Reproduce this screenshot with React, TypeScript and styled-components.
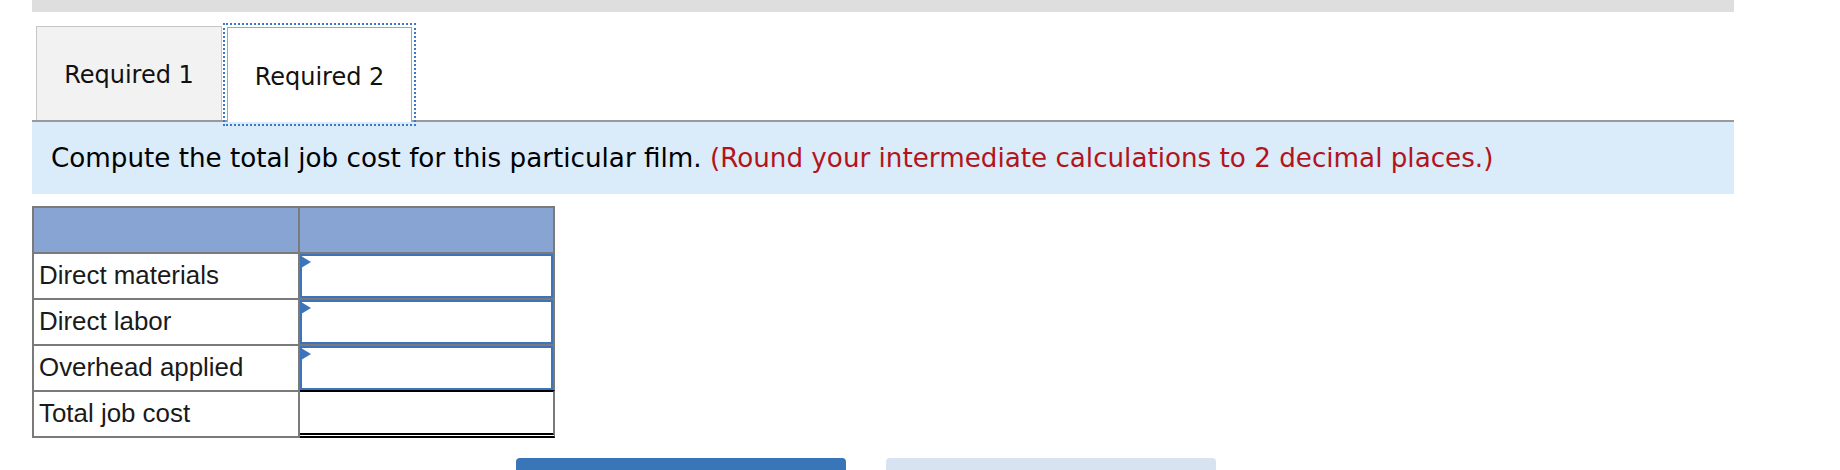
import React from 'react'
import styled, { createGlobalStyle } from 'styled-components'

//Global
const GlobalStyle = createGlobalStyle`
  body {
    margin: 0;
    background: #ffffff;
  }
`

//Styled Components
const Page = styled.div`
  width: 1702px;
  margin-left: 32px;
  display: flex;
  flex-direction: column;
`

const TopBar = styled.div`
  height: 12px;
  background-color: #dedede;
`

const TabList = styled.div`
  margin-top: 14px;
  display: flex;
  align-items: flex-end;
  padding-left: 4px;
  border-bottom: 2px solid #9a9a9a;
`

const Tab = styled.button<{ $active?: boolean }>`
  box-sizing: border-box;
  height: ${(props) => (props.$active ? '95px' : '94px')};
  width: ${(props) => (props.$active ? '185px' : '186px')};
  margin-left: ${(props) => (props.$active ? '5px' : '0')};
  margin-bottom: ${(props) => (props.$active ? '-2px' : '0')};
  padding: 3px 0 0;
  font-family: 'DejaVu Sans', Verdana, sans-serif;
  font-size: 24px;
  color: #111111;
  cursor: pointer;
  background-color: ${(props) => (props.$active ? '#ffffff' : '#f2f2f2')};
  border: 1px solid ${(props) => (props.$active ? '#a6a6a6' : '#c6c6c6')};
  border-bottom: none;
  outline: ${(props) => (props.$active ? '2px dotted #3b78c2' : 'none')};
  outline-offset: 2px;
  position: relative;
  z-index: ${(props) => (props.$active ? 1 : 0)};
`

const Instruction = styled.div`
  height: 72px;
  display: flex;
  align-items: center;
  padding-left: 19px;
  background-color: #daebf9;
  font-family: 'DejaVu Sans', Verdana, sans-serif;
  font-size: 26.2px;
  color: #000000;
  white-space: nowrap;
`

const Hint = styled.span`
  color: #b3141c;
  margin-left: 0.32em;
`

const Table = styled.div`
  margin-top: 12px;
  width: 523px;
  box-sizing: border-box;
  display: grid;
  grid-template-columns: 264px 253px;
  grid-auto-rows: 44px;
  gap: 2px;
  padding: 2px;
  background-color: #7a7a7a;
`

const HeadCell = styled.div`
  background-color: #87a4d3;
`

const LabelCell = styled.div`
  background-color: #ffffff;
  display: flex;
  align-items: center;
  padding-left: 5px;
  padding-bottom: 1px;
  font-family: 'Liberation Sans', Arial, sans-serif;
  font-size: 25.9px;
  color: #1a1a1a;
`

const InputCell = styled.div`
  position: relative;
  background-color: #ffffff;
  &::before {
    content: '';
    position: absolute;
    left: 1px;
    top: 2px;
    border-top: 6px solid transparent;
    border-bottom: 6px solid transparent;
    border-left: 10px solid #3b74ba;
  }
`

const AmountInput = styled.input`
  box-sizing: border-box;
  width: 100%;
  height: 100%;
  margin: 0;
  border: 2px solid #3b74ba;
  background: #ffffff;
  outline: none;
  font-family: 'Liberation Sans', Arial, sans-serif;
  font-size: 22px;
  text-align: right;
`

const TotalCell = styled.div`
  box-sizing: border-box;
  margin: -2px -2px -2px 0;
  background-color: #ffffff;
  border-top: 2px solid #000000;
  border-right: 2px solid #7a7a7a;
  border-bottom: 5px double #000000;
`

const NavRow = styled.div`
  margin-top: 20px;
  padding-left: 484px;
  display: flex;
  gap: 40px;
`

const NavButton = styled.button<{ $primary?: boolean }>`
  width: 330px;
  height: 46px;
  border: none;
  border-radius: 4px;
  background-color: ${(props) => (props.$primary ? '#3876b8' : '#d7e3f1')};
`

const rows = ['Direct materials', 'Direct labor', 'Overhead applied']

//React Component
function App() {
  return (
    <Page>
      <GlobalStyle />
      <TopBar />
      <TabList role="tablist">
        <Tab role="tab">Required 1</Tab>
        <Tab role="tab" $active>
          Required 2
        </Tab>
      </TabList>
      <Instruction>
        Compute the total job cost for this particular film.
        <Hint>(Round your intermediate calculations to 2 decimal places.)</Hint>
      </Instruction>
      <Table>
        <HeadCell />
        <HeadCell />
        {rows.map((label) => (
          <React.Fragment key={label}>
            <LabelCell>{label}</LabelCell>
            <InputCell>
              <AmountInput aria-label={label} />
            </InputCell>
          </React.Fragment>
        ))}
        <LabelCell>Total job cost</LabelCell>
        <TotalCell />
      </Table>
      <NavRow>
        <NavButton $primary aria-label="Required 1" />
        <NavButton aria-label="Required 2" />
      </NavRow>
    </Page>
  )
}
export default App
